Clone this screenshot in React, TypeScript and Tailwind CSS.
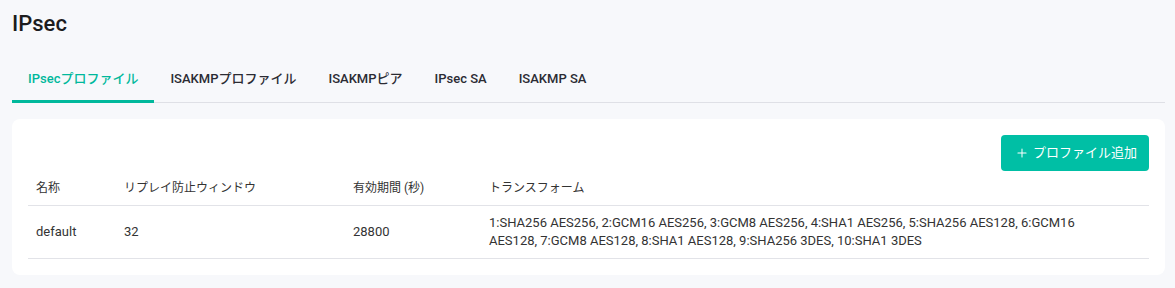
import { Plus } from "lucide-react";

const TABS = ["IPsecプロファイル", "ISAKMPプロファイル", "ISAKMPピア", "IPsec SA", "ISAKMP SA"];

const PROFILES = [
  {
    name: "default",
    replay: "32",
    lifetime: "28800",
    transform:
      "1:SHA256 AES256, 2:GCM16 AES256, 3:GCM8 AES256, 4:SHA1 AES256, 5:SHA256 AES128, 6:GCM16 AES128, 7:GCM8 AES128, 8:SHA1 AES128, 9:SHA256 3DES, 10:SHA1 3DES",
  },
];

export default function App() {
  return (
    <div
      className="min-h-screen bg-[#f7f8fb] pl-3 pr-[10px] pt-2 text-[#333333]"
      style={{ fontFamily: 'Roboto, "Noto Sans CJK JP", sans-serif' }}
    >
      <h1 className="text-[22px] font-medium leading-8 text-[#1c1c1e]">IPsec</h1>

      <div className="mt-[15px] flex border-b border-[#dfe0e6]">
        {TABS.map((tab, i) => (
          <div
            key={tab}
            className={`-mb-px flex h-12 items-center px-4 text-[13px] font-medium ${
              i === 0
                ? "border-b-[3px] border-[#00b89c] pt-[3px] text-[#00b89c]"
                : "text-[#2b2b33]"
            }`}
          >
            {tab}
          </div>
        ))}
      </div>

      <div className="mt-4 rounded-lg bg-white p-4">
        <div className="flex justify-end">
          <button className="flex h-9 items-center gap-1 rounded bg-[#00bfa5] pl-[14px] pr-3 text-[13px] text-white">
            <Plus className="h-[14px] w-[14px]" strokeWidth={1.75} />
            プロファイル追加
          </button>
        </div>

        <table className="w-full table-fixed border-collapse text-left text-[13px]">
          <colgroup>
            <col className="w-[88px]" />
            <col className="w-[229px]" />
            <col className="w-[136px]" />
            <col />
            <col className="w-[64px]" />
          </colgroup>
          <thead>
            <tr className="h-[34px] border-b border-[#e2e3e8] text-[12px]">
              <th className="px-2 font-normal">名称</th>
              <th className="px-2 font-normal">リプレイ防止ウィンドウ</th>
              <th className="px-2 font-normal">有効期間 (秒)</th>
              <th className="px-2 font-normal">トランスフォーム</th>
              <th />
            </tr>
          </thead>
          <tbody>
            {PROFILES.map((p) => (
              <tr key={p.name} className="h-[53px] border-b border-[#e2e3e8]">
                <td className="px-2">{p.name}</td>
                <td className="px-2">{p.replay}</td>
                <td className="px-2">{p.lifetime}</td>
                <td className="px-2 leading-[18px]">{p.transform}</td>
                <td />
              </tr>
            ))}
          </tbody>
        </table>
      </div>
    </div>
  );
}
